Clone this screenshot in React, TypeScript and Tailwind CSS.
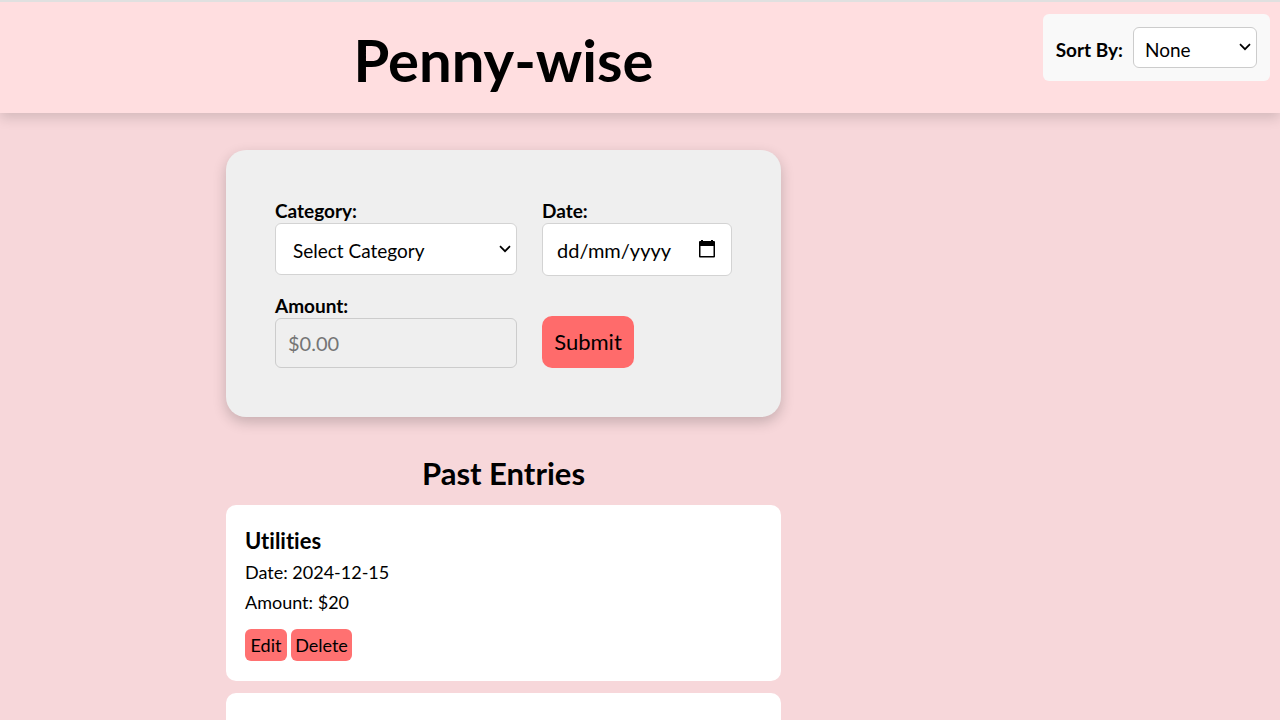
import type { ReactNode } from "react";

type Entry = { category: string; date: string; amount: number };

const entries: Entry[] = [
  { category: "Utilities", date: "2024-12-15", amount: 20 },
];

function Chevron({ className }: { className: string }) {
  return (
    <svg
      aria-hidden="true"
      viewBox="0 0 12 8"
      fill="none"
      stroke="black"
      strokeWidth="1.7"
      className={`pointer-events-none absolute h-2 w-3 ${className}`}
    >
      <path d="M1 1.2 6 6.2 11 1.2" />
    </svg>
  );
}

function Field({ id, label, children }: { id: string; label: string; children: ReactNode }) {
  return (
    <div className="flex flex-col">
      <label htmlFor={id} className="text-[19px] leading-6 font-bold">
        {label}
      </label>
      {children}
    </div>
  );
}

function Header() {
  return (
    <header className="grid grid-cols-[1fr_273px] border-t-2 border-[#e0e0e0] bg-[#ffdee0] shadow-[0_5px_12px_rgba(0,0,0,0.14)]">
      <h1 className="pt-5 pb-4 text-center text-[58px] leading-[75px] font-bold">Penny-wise</h1>
      <div className="mt-3 mr-[10px] flex h-[67px] items-center gap-[10px] self-start justify-self-end rounded-md bg-[#f9f9f9] px-[13px]">
        <label htmlFor="sort" className="pt-1 text-[19px] leading-6 font-bold whitespace-nowrap">
          Sort By:
        </label>
        <div className="relative">
          <select
            id="sort"
            className="h-[41px] w-[124px] appearance-none rounded-md border border-[#ccc] bg-white pt-1 pl-[11px] text-[19px] leading-6"
          >
            <option>None</option>
            <option>Category</option>
            <option>Date</option>
            <option>Amount</option>
          </select>
          <Chevron className="top-4 right-[6px]" />
        </div>
      </div>
    </header>
  );
}

function EntryForm() {
  return (
    <form className="grid grid-cols-[242px_190px] gap-x-[25px] gap-y-[18px] rounded-[20px] bg-[#efefef] p-[49px] shadow-[0_5px_14px_rgba(0,0,0,0.2)]">
      <Field id="category" label="Category:">
        <div className="relative">
          <select
            id="category"
            className="h-[52px] w-full appearance-none rounded-md border border-[#d3d3d3] bg-white pt-1 pl-[17px] text-[19px] leading-6"
          >
            <option>Select Category</option>
            <option>Utilities</option>
            <option>Food</option>
          </select>
          <Chevron className="top-[22px] right-[6px]" />
        </div>
      </Field>
      <Field id="date" label="Date:">
        <div className="relative">
          <input
            id="date"
            type="text"
            placeholder="dd/mm/yyyy"
            className="h-[53px] w-full rounded-md border border-[#d3d3d3] bg-white pl-[14px] text-[20px] leading-6 placeholder:text-black"
          />
          <svg
            aria-hidden="true"
            viewBox="0 0 16 18"
            className="pointer-events-none absolute top-[17px] right-[17px] h-[18px] w-4"
          >
            <path
              d="M2 0h2v1h8V0h2v1h1a1 1 0 0 1 1 1v14.500a1 1 0 0 1-1 1H1a1 1 0 0 1-1-1V2a1 1 0 0 1 1-1h1zM1.500 6v10h13V6z"
              fillRule="evenodd"
            />
          </svg>
        </div>
      </Field>
      <Field id="amount" label="Amount:">
        <input
          id="amount"
          type="text"
          inputMode="decimal"
          placeholder="$0.00"
          className="h-[50px] w-full rounded-md border border-[#ccc] bg-transparent px-3 text-[20px] leading-6 placeholder:text-[#757575]"
        />
      </Field>
      <button
        type="submit"
        className="h-[52px] w-[92px] self-end justify-self-start rounded-[10px] bg-[#ff6b6b] text-[22px] leading-6"
      >
        Submit
      </button>
    </form>
  );
}

function EntryCard({ entry }: { entry: Entry }) {
  return (
    <li className="rounded-[10px] bg-white px-[19px] py-5">
      <h3 className="text-[22px] leading-8 font-bold">{entry.category}</h3>
      <p className="text-[18px] leading-[30px]">Date: {entry.date}</p>
      <p className="text-[18px] leading-[30px]">Amount: ${entry.amount}</p>
      <div className="mt-3 flex gap-1">
        <button type="button" className="h-8 w-[42px] rounded-md bg-[#ff7171] text-[18px]">
          Edit
        </button>
        <button type="button" className="h-8 w-[61px] rounded-md bg-[#ff7171] text-[18px]">
          Delete
        </button>
      </div>
    </li>
  );
}

export default function App() {
  return (
    <div className="h-screen overflow-hidden bg-[#f7d7da] font-['Lato',sans-serif] text-black [font-variant-ligatures:none]">
      <Header />
      <main className="grid grid-cols-[1fr_273px] pt-[37px]">
        <div className="w-[555px] justify-self-center">
          <EntryForm />
          <h2 className="pt-[38px] pb-[14px] text-center text-[31px] leading-9 font-bold">Past Entries</h2>
          <ul className="flex flex-col gap-3">
            {entries.map((entry) => (
              <EntryCard key={entry.date} entry={entry} />
            ))}
            <li className="h-44 rounded-[10px] bg-white" />
          </ul>
        </div>
      </main>
    </div>
  );
}
